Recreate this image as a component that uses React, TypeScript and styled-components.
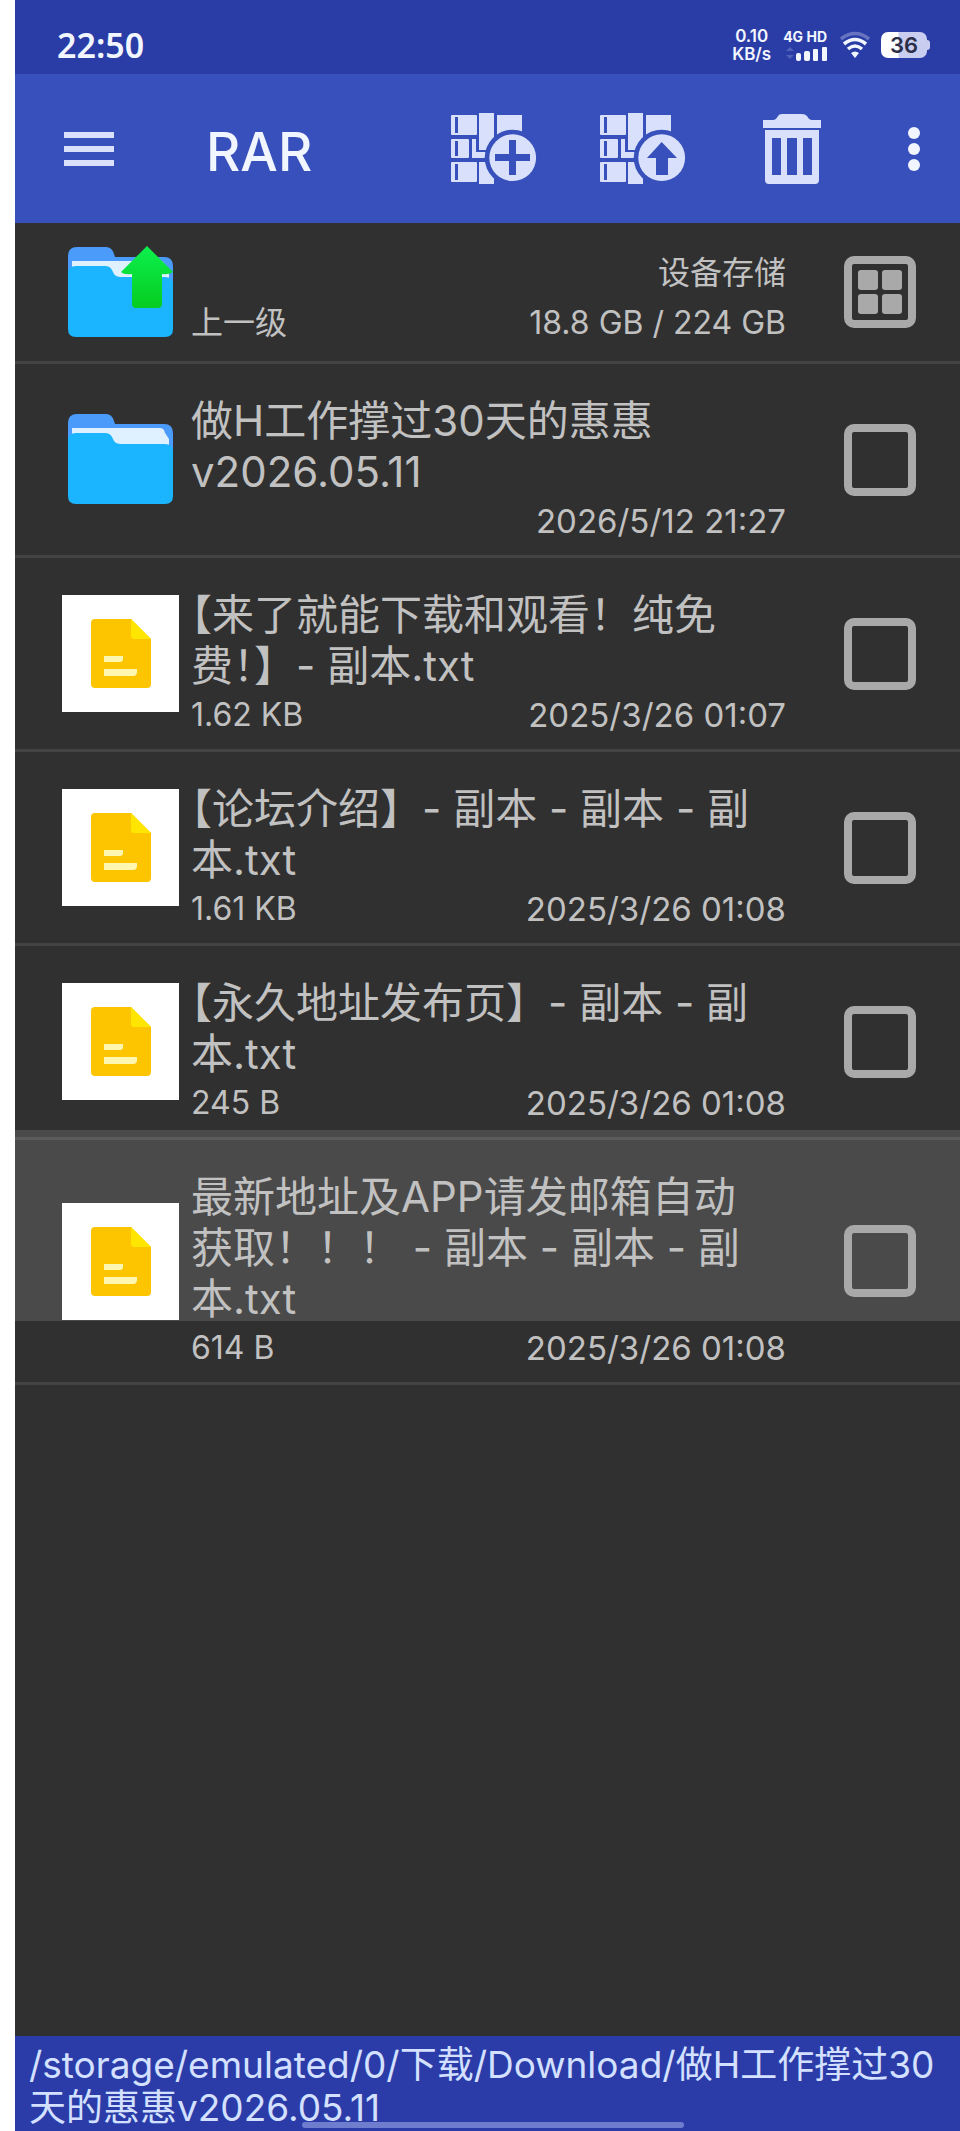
import React from "react";
import styled, { createGlobalStyle } from "styled-components";

const GlobalStyle = createGlobalStyle`
  *, *::before, *::after { box-sizing: border-box; }
  body {
    margin: 0;
    background: #ffffff;
    font-family: Inter, "Noto Sans CJK SC", sans-serif;
  }
`;

const Screen = styled.div`
  display: flex;
  flex-direction: column;
  min-height: 100vh;
  margin-left: 15px;
  background: #303030;
  color: #c1c1c1;
`;

const StatusBar = styled.div`
  display: flex;
  align-items: center;
  height: 74px;
  padding: 16px 30px 0 42px;
  background: #2a3da6;
  color: #f2f6ff;
`;

const Clock = styled.time`
  margin-right: auto;
  font-family: "Noto Sans", sans-serif;
  font-size: 34px;
  line-height: 40px;
  font-weight: 600;
`;

const NetSpeed = styled.div`
  display: flex;
  flex-direction: column;
  align-items: center;
  font-size: 17px;
  line-height: 18px;
  font-weight: 600;
`;

const Signal = styled.div`
  display: flex;
  flex-direction: column;
  align-items: flex-end;
  gap: 2px;
  margin-left: 12px;
  font-size: 14px;
  line-height: 14px;
  font-weight: 700;
`;

const WifiIcon = styled.svg`
  width: 32px;
  height: 28px;
  margin-left: 12px;
`;

const Battery = styled.div`
  display: flex;
  align-items: center;
  margin-left: 10px;
`;

const BatteryBody = styled.div`
  width: 46px;
  height: 26px;
  border-radius: 7px;
  background: linear-gradient(90deg, #ffffff 36%, #c9cdf0 40%);
  color: #2b2e48;
  font-size: 22px;
  line-height: 26px;
  font-weight: 600;
  text-align: center;
`;

const BatteryTip = styled.div`
  width: 3px;
  height: 10px;
  border-radius: 0 3px 3px 0;
  background: #c9cdf0;
`;

const Toolbar = styled.header`
  display: flex;
  align-items: center;
  height: 149px;
  padding: 0 40px 0 49px;
  background: #3850bb;
`;

const AppTitle = styled.h1`
  margin: 0 auto 0 92px;
  padding-top: 6px;
  color: #f1f5ff;
  font-size: 53px;
  line-height: 64px;
  font-weight: 500;
`;

const Actions = styled.div`
  display: flex;
  gap: 61px;
  margin-right: 72px;
`;

const IconButton = styled.button<{ $width: number }>`
  display: flex;
  justify-content: center;
  width: ${(p) => p.$width}px;
  padding: 0;
  border: 0;
  background: none;
  color: #d9e0fb;
  cursor: pointer;
  svg { display: block; flex: none; }
`;

const FileList = styled.ul`
  flex: 1;
  margin: 0;
  padding: 0;
  list-style: none;
`;

const Row = styled.li<{ $parent?: boolean }>`
  position: relative;
  display: flex;
  align-items: center;
  padding: ${(p) => (p.$parent ? "25px 44px 13px 47px" : "31px 44px 10px 47px")};
  border-bottom: 3px solid #434343;
`;

const TouchHighlight = styled.div`
  position: absolute;
  top: -10px;
  left: 0;
  right: 0;
  height: 191px;
  background: rgba(255, 255, 255, 0.13);
`;

/* The icon and tick box centre on the whole row, not on its padded text area. */
const Thumb = styled.div<{ $parent?: boolean }>`
  position: relative;
  flex: none;
  width: 117px;
  height: 117px;
  margin: ${(p) => (p.$parent ? "-25px 12px -13px 0" : "-31px 12px -10px 0")};
  svg { display: block; }
`;

const FileThumb = styled(Thumb)`
  background: #ffffff;
`;

const Details = styled.label`
  position: relative;
  flex: 1;
  min-width: 0;
`;

const FileName = styled.span`
  display: block;
  padding-right: 24px;
  font-size: 42px;
  line-height: 51px;
  text-spacing-trim: trim-start;
`;

/* Half-width form of a full-width mark that is followed by a bracket. */
const HalfMark = styled.span`
  font-feature-settings: "halt";
`;

const Meta = styled.span`
  display: flex;
  justify-content: space-between;
  min-height: 48px;
  font-size: 32px;
  line-height: 48px;
`;

const Modified = styled.time`
  font-size: 33px;
`;

const Storage = styled.div`
  flex: 1;
  display: flex;
  align-items: flex-end;
  justify-content: space-between;
  font-size: 32px;
  line-height: 50px;
`;

const StorageInfo = styled.div`
  text-align: right;
`;

const ParentLink = styled.a`
  color: inherit;
  text-decoration: none;
`;

const Tick = styled.input`
  position: relative;
  appearance: none;
  flex: none;
  width: 72px;
  height: 72px;
  margin: -21px 0 0 58px;
  border: 8px solid #a9a9a9;
  border-radius: 10px;
  &:checked { background: #a9a9a9; }
`;

const SelectAll = styled.button`
  flex: none;
  display: grid;
  grid-template-columns: 20px 20px;
  place-content: center;
  gap: 4px;
  width: 72px;
  height: 72px;
  margin: -12px 0 0 58px;
  padding: 0;
  border: 8px solid #a9a9a9;
  border-radius: 10px;
  background: none;
`;

const Cell = styled.span`
  height: 20px;
  border-radius: 3px;
  background: #a9a9a9;
`;

const PathBar = styled.footer`
  position: relative;
  padding: 7px 14px 2px;
  background: #2b3ca8;
  color: #d3e0ff;
  font-size: 37px;
  line-height: 43px;
  overflow-wrap: anywhere;
`;

const HomeIndicator = styled.div`
  position: absolute;
  bottom: 3px;
  left: 50%;
  width: 382px;
  height: 6px;
  margin-left: -186px;
  border-radius: 3px;
  background: #6f7dce;
`;

function ArchiveIcon({ children }: { children: React.ReactNode }) {
  return (
    <svg width="88" height="74" viewBox="0 0 88 74" fill="currentColor" aria-hidden="true">
      <rect x="1" y="3" width="26" height="20" rx="1" />
      <rect x="1" y="27" width="18" height="19" rx="1" />
      <rect x="1" y="50" width="26" height="20" rx="1" />
      <rect x="29" y="1" width="15" height="37" />
      <path d="M22 27h4v13h10v6H22z" />
      <rect x="47" y="3" width="25" height="20" />
      <rect x="29" y="50" width="15" height="22" />
      <g fill="#3850bb">
        <rect x="5" y="5" width="3" height="16" />
        <rect x="5" y="29" width="3" height="15" />
        <rect x="5" y="52" width="3" height="16" />
        <circle cx="62.7" cy="45.7" r="28" />
      </g>
      <circle cx="62.7" cy="45.7" r="23.4" />
      <g fill="#3850bb">{children}</g>
    </svg>
  );
}

function FolderIcon({ up }: { up?: boolean }) {
  return (
    <svg width="117" height="117" viewBox="0 0 117 117" aria-hidden="true">
      <defs>
        <linearGradient id="arrow" x1="0" y1="0" x2="0" y2="1">
          <stop offset="0" stopColor="#0cf04e" />
          <stop offset="1" stopColor="#06cc20" />
        </linearGradient>
      </defs>
      <path d="M6 22q0-9 9-9h29q6 0 8 7l1 3h49q9 0 9 9v40H6z" fill="#4b9bfb" />
      <path d="M10 27h88q4 0 5 5l4 6v10H10z" fill="#dff1ff" />
      <path d="M6 40q0-8 8-8h29q5 0 7 4l2 4q2 3 7 3h44q8 0 8 8v44q0 8-8 8H14q-8 0-8-8z" fill="#1bb5ff" />
      {up && (
        <path d="M85 12 111 38Q107 41 100 40V70q0 4-4 4H74q-4 0-4-4V40q-8 1-11-2z" fill="url(#arrow)" />
      )}
    </svg>
  );
}

function TextFileIcon() {
  return (
    <svg width="117" height="117" viewBox="0 0 117 117" aria-hidden="true">
      <path d="M33 24h36l20 20v45q0 4-4 4H33q-4 0-4-4V28q0-4 4-4z" fill="#fdc500" />
      <path d="M69 24l20 20H72q-3 0-3-3z" fill="#ffe600" />
      <path d="M42 61h19v3q0 3-3 3H42zM42 74h33v3q0 4-4 4H42z" fill="#fff6b0" />
    </svg>
  );
}

type Entry = {
  id: string;
  name: React.ReactNode;
  size?: string;
  date: string;
  folder?: boolean;
  touched?: boolean;
};

const entries: Entry[] = [
  { id: "f1", name: "做H工作撑过30天的惠惠v2026.05.11", date: "2026/5/12 21:27", folder: true },
  {
    id: "f2",
    name: <>【来了就能下载和观看！纯免费<HalfMark>！</HalfMark>】- 副本.txt</>,
    size: "1.62 KB",
    date: "2025/3/26 01:07",
  },
  { id: "f3", name: "【论坛介绍】- 副本 - 副本 - 副本.txt", size: "1.61 KB", date: "2025/3/26 01:08" },
  { id: "f4", name: "【永久地址发布页】- 副本 - 副本.txt", size: "245 B", date: "2025/3/26 01:08" },
  { id: "f5", name: "最新地址及APP请发邮箱自动获取！！！ - 副本 - 副本 - 副本.txt", size: "614 B", date: "2025/3/26 01:08", touched: true },
];

function FileRow({ entry }: { entry: Entry }) {
  return (
    <Row>
      {entry.touched && <TouchHighlight />}
      {entry.folder ? (
        <Thumb><FolderIcon /></Thumb>
      ) : (
        <FileThumb><TextFileIcon /></FileThumb>
      )}
      <Details htmlFor={entry.id}>
        <FileName>{entry.name}</FileName>
        <Meta>
          <span>{entry.size}</span>
          <Modified>{entry.date}</Modified>
        </Meta>
      </Details>
      <Tick type="checkbox" id={entry.id} />
    </Row>
  );
}

export default function App() {
  return (
    <Screen>
      <GlobalStyle />
      <StatusBar>
        <Clock>22:50</Clock>
        <NetSpeed>
          <span>0.10</span>
          <span>KB/s</span>
        </NetSpeed>
        <Signal>
          <span>4G HD</span>
          <svg width="41" height="15" viewBox="0 0 41 15" fill="currentColor" aria-hidden="true">
            <path d="M4 1l4 4H0zM4 13l4-4H0z" opacity="0.2" />
            <rect x="10" y="7" width="5" height="8" rx="2" />
            <rect x="18" y="5" width="6" height="10" rx="2" />
            <rect x="27" y="3" width="5" height="12" rx="1" />
            <rect x="36" y="1" width="5" height="14" rx="1" />
          </svg>
        </Signal>
        <WifiIcon viewBox="0 0 32 28" fill="none" stroke="currentColor" strokeWidth="3.6" aria-hidden="true">
          <path d="M2 8q14-11 28 0" opacity="0.3" />
          <path d="M5 13q11-9 22 0" />
          <path d="M9 18q7-6 14 0" />
          <path d="M12 22q4-3 8 0l-4 5z" fill="currentColor" stroke="none" />
        </WifiIcon>
        <Battery>
          <BatteryBody>36</BatteryBody>
          <BatteryTip />
        </Battery>
      </StatusBar>
      <Toolbar>
        <IconButton $width={50} aria-label="菜单">
          <svg width="50" height="36" viewBox="0 0 50 36" fill="currentColor" aria-hidden="true">
            <path d="M0 1h50v6H0zM0 15h50v6H0zM0 29h50v6H0z" />
          </svg>
        </IconButton>
        <AppTitle>RAR</AppTitle>
        <Actions>
          <IconButton $width={88} aria-label="添加到压缩文件">
            <ArchiveIcon>
              <path d="M59 28h7v14h14v7H66v14h-7V49H45v-7h14z" />
            </ArchiveIcon>
          </IconButton>
          <IconButton $width={88} aria-label="解压">
            <ArchiveIcon>
              <path d="M62.7 30 78 46h-9v17H57V46h-9z" />
            </ArchiveIcon>
          </IconButton>
          <IconButton $width={88} aria-label="删除">
            <svg width="60" height="74" viewBox="0 0 60 74" fill="currentColor" aria-hidden="true">
              <path d="M1 8h10q3 0 5-4 1-2 4-2h20q3 0 5 2 2 4 5 4h9v8H1z" />
              <path
                fillRule="evenodd"
                d="M3 18h54v50q0 4-4 4H7q-4 0-4-4zM10 26v37h9V26zM25 26v37h10V26zM41 26v37h9V26z"
              />
            </svg>
          </IconButton>
        </Actions>
        <IconButton $width={12} aria-label="更多">
          <svg width="12" height="46" viewBox="0 0 12 46" fill="#f1f5ff" aria-hidden="true">
            <circle cx="6" cy="7" r="6" />
            <circle cx="6" cy="23" r="6" />
            <circle cx="6" cy="39" r="6" />
          </svg>
        </IconButton>
      </Toolbar>
      <FileList>
        <Row $parent>
          <Thumb $parent><FolderIcon up /></Thumb>
          <Storage>
            <ParentLink href="#up">上一级</ParentLink>
            <StorageInfo>
              <div>设备存储</div>
              <div>18.8 GB / 224 GB</div>
            </StorageInfo>
          </Storage>
          <SelectAll aria-label="全选">
            <Cell /><Cell /><Cell /><Cell />
          </SelectAll>
        </Row>
        {entries.map((entry) => (
          <FileRow key={entry.id} entry={entry} />
        ))}
      </FileList>
      <PathBar>
        /storage/emulated/0/下载/Download/做H工作撑过30天的惠惠v2026.05.11
        <HomeIndicator />
      </PathBar>
    </Screen>
  );
}
